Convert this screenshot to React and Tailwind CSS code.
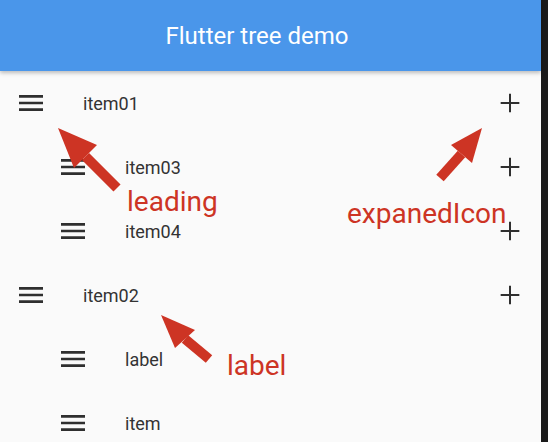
import React from 'react';

const rows = [
    { label: 'item01', level: 0, expandable: true },
    { label: 'item03', level: 1, expandable: true },
    { label: 'item04', level: 1, expandable: true },
    { label: 'item02', level: 0, expandable: true },
    { label: 'label', level: 1, expandable: false },
    { label: 'item', level: 1, expandable: false },
];

const MenuIcon = () => (
    <svg width="32" height="32" viewBox="0 0 24 24" fill="#2f2f2f">
        <path d="M3 18h18v-2H3v2zm0-5h18v-2H3v2zm0-7v2h18V6H3z" />
    </svg>
);

const AddIcon = () => (
    <svg width="32" height="32" viewBox="0 0 24 24" fill="#2f2f2f">
        <path d="M19 12.75h-6.25V19h-1.5v-6.25H5v-1.5h6.25V5h1.5v6.25H19v1.5z" />
    </svg>
);

// red annotation arrow: shaft + head
const Arrow = ({ tip, w1, w2, tail }) => {
    const mx = (w1[0] + w2[0]) / 2;
    const my = (w1[1] + w2[1]) / 2;
    return (
        <g>
            <line x1={tail[0]} y1={tail[1]} x2={mx} y2={my} stroke="#cd3424" strokeWidth="10" />
            <polygon points={`${tip[0]},${tip[1]} ${w1[0]},${w1[1]} ${w2[0]},${w2[1]}`} fill="#cd3424" />
        </g>
    );
};

const TreeRow = ({ row }) => (
    <div
        className={`h-16 flex items-center pr-[15px] ${row.level === 0 ? 'pl-[15px]' : 'pl-[57px]'}`}
    >
        <MenuIcon />
        <span className="ml-9 flex-1 text-[18px] text-[#333333]">{row.label}</span>
        {row.expandable && <AddIcon />}
    </div>
);

export default function App() {
    return (
        <div
            className="w-[548px] h-[442px] flex overflow-hidden bg-[#1a1a1a]"
            style={{ fontFamily: 'Roboto, "Noto Sans", sans-serif' }}
        >
            <div className="w-[541px] h-full bg-[#fafafa] relative flex flex-col">
                {/* app bar */}
                <div className="h-[71px] shrink-0 bg-[#4a96ea] flex items-center justify-center pr-[27px] shadow-[0_2px_4px_rgba(0,0,0,0.25)] relative z-10">
                    <span className="text-white text-[24px]">Flutter tree demo</span>
                </div>

                {/* tree */}
                <div className="flex flex-col">
                    {rows.map((row, i) => (
                        <TreeRow key={i} row={row} />
                    ))}
                </div>

                {/* annotations */}
                <svg className="absolute left-0 top-0 pointer-events-none" width="541" height="442">
                    <Arrow tip={[58, 128]} w1={[97, 145]} w2={[74, 168]} tail={[117, 188]} />
                    <Arrow tip={[482, 128]} w1={[451, 145]} w2={[472, 163]} tail={[440, 178]} />
                    <Arrow tip={[161, 315]} w1={[195, 330]} w2={[175, 348]} tail={[209, 359]} />
                </svg>
                <span className="absolute left-[127px] top-[188px] text-[28px] leading-none text-[#cd3424]">leading</span>
                <span className="absolute left-[347px] top-[200px] text-[28px] leading-none text-[#cd3424]">expanedIcon</span>
                <span className="absolute left-[227px] top-[352px] text-[28px] leading-none text-[#cd3424]">label</span>
            </div>
        </div>
    );
}
